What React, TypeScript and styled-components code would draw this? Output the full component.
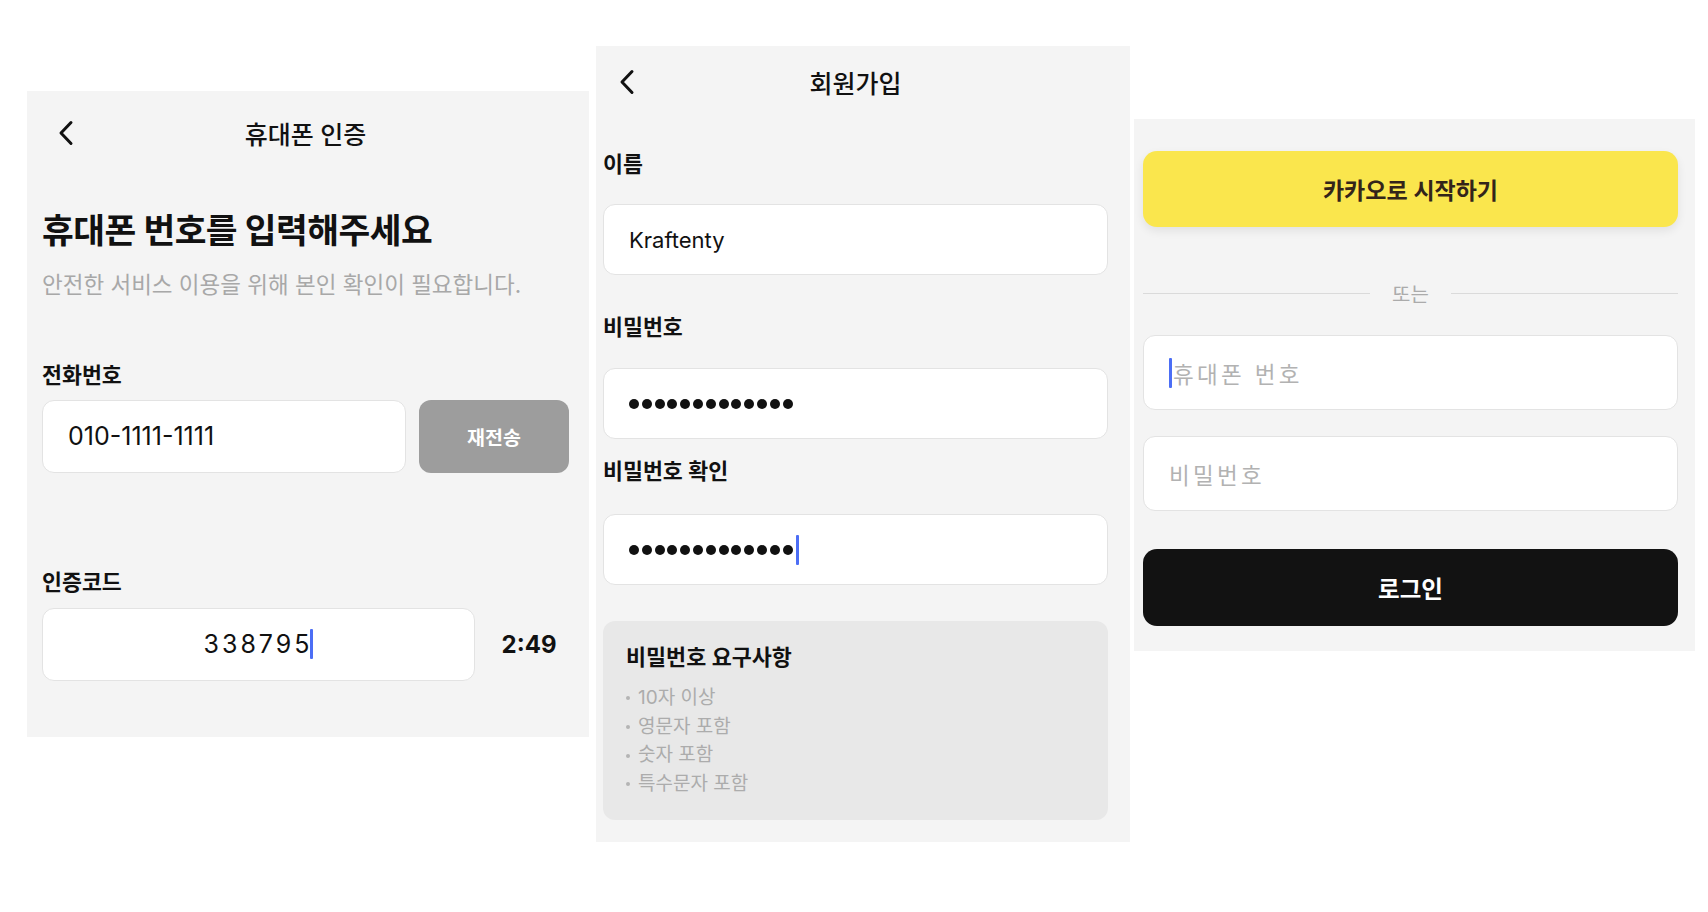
import React from "react";
import styled, { createGlobalStyle } from "styled-components";

const GlobalStyle = createGlobalStyle`
  html, body {
    margin: 0;
    padding: 0;
    background: #ffffff;
  }
  body {
    font-family: "Inter", "Noto Sans CJK KR", sans-serif;
    color: #111111;
  }
  * {
    box-sizing: border-box;
  }
`;

type PanelProps = {
  top: number;
  left: number;
  width: number;
  padLeft: number;
  padRight: number;
  padBottom: number;
};

const Page = styled.div`
  width: 1708px;
  height: 912px;
  display: flex;
  align-items: flex-start;
  padding-left: 27px;
`;

const Panel = styled.div<PanelProps>`
  margin-top: ${(p) => p.top}px;
  margin-left: ${(p) => p.left}px;
  width: ${(p) => p.width}px;
  flex-shrink: 0;
  background: #f4f4f4;
  display: flex;
  flex-direction: column;
  padding: 0 ${(p) => p.padRight}px ${(p) => p.padBottom}px ${(p) => p.padLeft}px;
`;

const Header = styled.div<{ height: number }>`
  height: ${(p) => p.height}px;
  display: grid;
  grid-template-columns: 1fr auto 1fr;
  align-items: center;
`;

const BackButton = styled.div<{ indent: number }>`
  padding-left: ${(p) => p.indent}px;
  display: flex;
  align-items: center;
`;

const HeaderTitle = styled.div`
  font-size: 25px;
  font-weight: 500;
  color: #111;
`;

const Heading = styled.h1`
  margin: 35px 0 0;
  font-size: 34.5px;
  font-weight: 700;
  line-height: 1.2;
  letter-spacing: -0.5px;
`;

const Subtitle = styled.p`
  margin: 18px 0 0;
  font-size: 22.5px;
  color: #a8a8a8;
  line-height: 1.4;
`;

const Label = styled.div<{ gapTop: number; gapBottom: number }>`
  margin-top: ${(p) => p.gapTop}px;
  margin-bottom: ${(p) => p.gapBottom}px;
  font-size: 21.7px;
  font-weight: 600;
  line-height: 28px;
  color: #111;
`;

const Row = styled.div`
  display: flex;
  align-items: center;
`;

const Field = styled.div<{ height: number; center?: boolean }>`
  flex: 1;
  height: ${(p) => p.height}px;
  background: #ffffff;
  border: 1.5px solid #e3e3e3;
  border-radius: 12px;
  display: flex;
  align-items: center;
  justify-content: ${(p) => (p.center ? "center" : "flex-start")};
  padding: 0 ${(p) => (p.center ? 0 : 25)}px;
  font-size: 22px;
  color: #111;
`;

const PhoneText = styled.span`
  font-size: 25px;
`;

const CodeText = styled.span`
  font-size: 25px;
  letter-spacing: 3px;
  margin-right: -3px;
`;

const Caret = styled.span`
  display: inline-block;
  width: 3px;
  height: 30px;
  margin-left: 1px;
  background: #4c6ef5;
  border-radius: 1px;
`;

const PlaceholderCaret = styled(Caret)`
  margin: 0 1px 0 0;
`;

const Placeholder = styled.span`
  font-size: 22.5px;
  color: #b2b2b2;
  letter-spacing: 3.3px;
`;

const ResendButton = styled.button`
  width: 150px;
  height: 73px;
  margin-left: 13px;
  border: none;
  border-radius: 12px;
  background: #9d9d9d;
  color: #ffffff;
  font-family: inherit;
  font-size: 19.5px;
  font-weight: 600;
`;

const Timer = styled.div`
  width: 94px;
  text-align: center;
  font-size: 24px;
  font-weight: 700;
  padding-left: 14px;
`;

const Dots = styled.div`
  display: flex;
  align-items: center;
  gap: 2.8px;
`;

const Dot = styled.span`
  width: 10px;
  height: 10px;
  border-radius: 50%;
  background: #111;
`;

const RuleBox = styled.div`
  margin-top: 36px;
  height: 199px;
  background: #e8e8e8;
  border-radius: 12px;
  padding: 22px 23px;
`;

const RuleTitle = styled.div`
  font-size: 21.8px;
  font-weight: 600;
  line-height: 28px;
  margin-bottom: 13px;
`;

const RuleItem = styled.div`
  display: flex;
  align-items: center;
  font-size: 19px;
  line-height: 28.7px;
  color: #acacac;

  &::before {
    content: "";
    width: 4px;
    height: 4px;
    border-radius: 50%;
    background: #b4b4b4;
    margin-right: 8px;
  }
`;

const KakaoButton = styled.button`
  height: 76px;
  margin-top: 32px;
  border: none;
  border-radius: 14px;
  background: #fae64d;
  box-shadow: 0 4px 10px rgba(0, 0, 0, 0.08);
  color: #33241a;
  font-family: inherit;
  font-size: 23px;
  font-weight: 600;
`;

const Divider = styled.div`
  margin: 52px 0 27px;
  display: flex;
  align-items: center;
  gap: 22px;
  font-size: 20px;
  color: #ababab;

  &::before,
  &::after {
    content: "";
    flex: 1;
    height: 1.5px;
    background: #dadada;
  }
`;

const LoginButton = styled.button`
  height: 77px;
  margin-top: 38px;
  border: none;
  border-radius: 14px;
  background: #121212;
  color: #ffffff;
  font-family: inherit;
  font-size: 23.5px;
  font-weight: 600;
`;

const Stack = styled.div<{ gap: number }>`
  display: flex;
  flex-direction: column;
  gap: ${(p) => p.gap}px;
`;

const Chevron = () => (
  <svg width="16" height="26" viewBox="0 0 16 26" fill="none">
    <polyline
      points="13,2.5 3,13 13,23.5"
      stroke="#111"
      strokeWidth="3"
      strokeLinecap="round"
      strokeLinejoin="round"
    />
  </svg>
);

const PasswordDots = ({ count, caret }: { count: number; caret?: boolean }) => (
  <Dots>
    {Array.from({ length: count }).map((_, i) => (
      <Dot key={i} />
    ))}
    {caret && <Caret />}
  </Dots>
);

const rules = ["10자 이상", "영문자 포함", "숫자 포함", "특수문자 포함"];

export default function App() {
  return (
    <>
      <GlobalStyle />
      <Page>
        <Panel top={91} left={0} width={562} padLeft={15} padRight={20} padBottom={56}>
          <Header height={84}>
            <BackButton indent={16}>
              <Chevron />
            </BackButton>
            <HeaderTitle>휴대폰 인증</HeaderTitle>
            <div />
          </Header>
          <Heading>휴대폰 번호를 입력해주세요</Heading>
          <Subtitle>안전한 서비스 이용을 위해 본인 확인이 필요합니다.</Subtitle>
          <Label gapTop={60} gapBottom={11}>전화번호</Label>
          <Row>
            <Field height={73}>
              <PhoneText>010-1111-1111</PhoneText>
            </Field>
            <ResendButton>재전송</ResendButton>
          </Row>
          <Label gapTop={95} gapBottom={12}>인증코드</Label>
          <Row>
            <Field height={73} center>
              <CodeText>338795</CodeText>
              <Caret />
            </Field>
            <Timer>2:49</Timer>
          </Row>
        </Panel>

        <Panel top={46} left={7} width={534} padLeft={7} padRight={22} padBottom={22}>
          <Header height={72}>
            <BackButton indent={16}>
              <Chevron />
            </BackButton>
            <HeaderTitle>회원가입</HeaderTitle>
            <div />
          </Header>
          <Label gapTop={32} gapBottom={26}>이름</Label>
          <Field height={71} style={{ flex: "none" }}>Kraftenty</Field>
          <Label gapTop={38} gapBottom={27}>비밀번호</Label>
          <Field height={71} style={{ flex: "none" }}>
            <PasswordDots count={13} />
          </Field>
          <Label gapTop={18} gapBottom={29}>비밀번호 확인</Label>
          <Field height={71} style={{ flex: "none" }}>
            <PasswordDots count={13} caret />
          </Field>
          <RuleBox>
            <RuleTitle>비밀번호 요구사항</RuleTitle>
            {rules.map((r) => (
              <RuleItem key={r}>{r}</RuleItem>
            ))}
          </RuleBox>
        </Panel>

        <Panel top={119} left={4} width={561} padLeft={9} padRight={17} padBottom={25}>
          <KakaoButton>카카오로 시작하기</KakaoButton>
          <Divider>또는</Divider>
          <Stack gap={26}>
            <Field height={75} style={{ flex: "none" }}>
              <PlaceholderCaret />
              <Placeholder>휴대폰 번호</Placeholder>
            </Field>
            <Field height={75} style={{ flex: "none" }}>
              <Placeholder>비밀번호</Placeholder>
            </Field>
          </Stack>
          <LoginButton>로그인</LoginButton>
        </Panel>
      </Page>
    </>
  );
}
